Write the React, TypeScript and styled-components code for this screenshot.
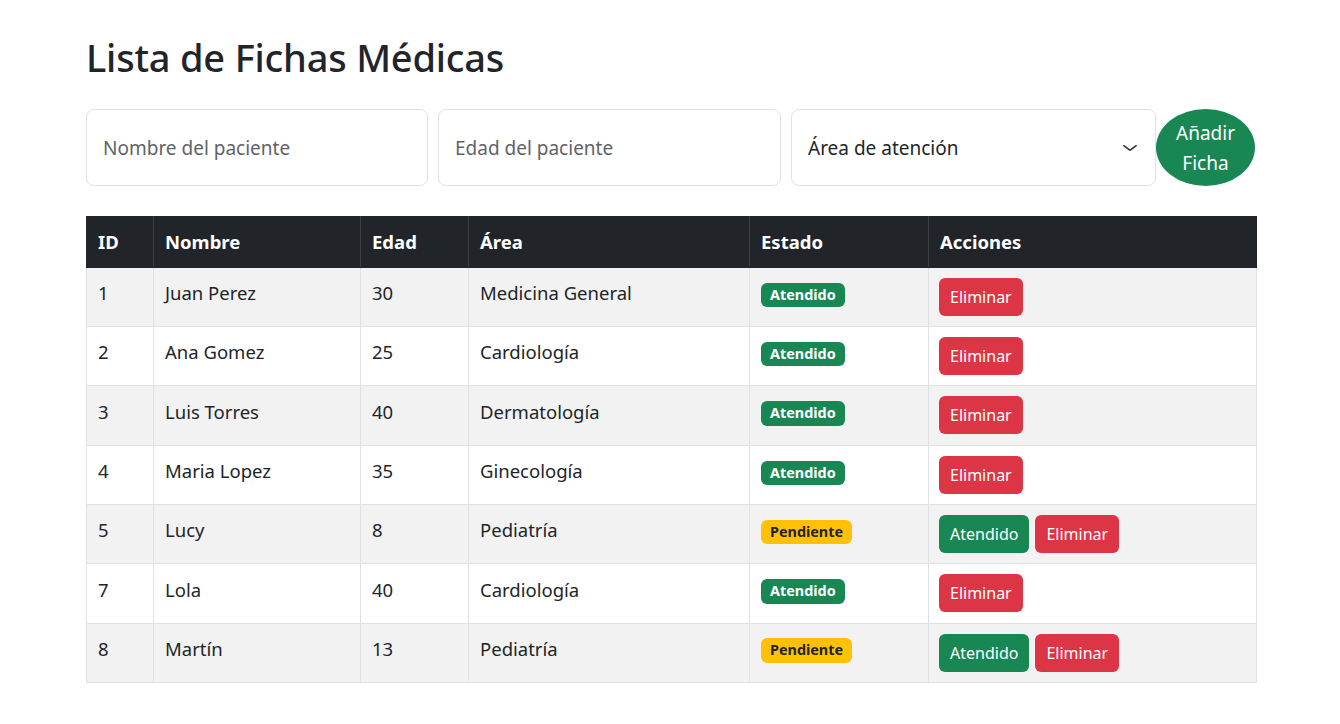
import React from "react";
import styled, { createGlobalStyle } from "styled-components";

const GlobalStyle = createGlobalStyle`
  html, body { margin: 0; padding: 0; background: #ffffff; }
  body {
    font-family: "Noto Sans", "Open Sans", sans-serif;
    color: #212529;
    font-size: 16px;
    line-height: 1.5;
  }
  * { box-sizing: border-box; }
`;

const Page = styled.div`
  width: 1170px;
  margin: 0 0 0 86px;
  padding-top: 33px;
`;

const Title = styled.h1`
  margin: 0 0 28px 0;
  font-size: 38px;
  font-weight: 500;
  line-height: 48px;
  color: #212529;
  letter-spacing: -0.2px;
`;

const FormRow = styled.div`
  display: flex;
  align-items: stretch;
  height: 77px;
  margin-bottom: 30px;
`;

const TextInput = styled.input<{ $width: number }>`
  width: ${(p) => p.$width}px;
  height: 77px;
  margin-right: 10px;
  padding: 0 16px;
  border: 1px solid #dee2e6;
  border-radius: 8px;
  font-family: inherit;
  font-size: 19px;
  color: #212529;
  background: #fff;
  outline: none;
  &::placeholder { color: #5f6367; }
`;

const SelectWrap = styled.div`
  position: relative;
  width: 365px;
  height: 77px;
`;

const Select = styled.select`
  appearance: none;
  width: 100%;
  height: 100%;
  padding: 0 48px 0 16px;
  border: 1px solid #dee2e6;
  border-radius: 8px;
  font-family: inherit;
  font-size: 19px;
  color: #212529;
  background: #fff;
  outline: none;
`;

const Chevron = styled.svg`
  position: absolute;
  right: 18px;
  top: 33px;
  width: 16px;
  height: 12px;
  pointer-events: none;
`;

const AddButton = styled.button`
  width: 99px;
  height: 77px;
  border: none;
  border-radius: 50%;
  background: #198754;
  color: #fff;
  font-family: inherit;
  font-size: 19px;
  line-height: 30px;
  padding: 0 10px;
  cursor: pointer;
`;

const Table = styled.table`
  width: 1170px;
  border-collapse: collapse;
  table-layout: fixed;
  font-size: 18.5px;
  line-height: 1.5;
`;

const HeadCell = styled.th`
  background: #212529;
  color: #fff;
  font-weight: 700;
  text-align: left;
  padding: 11px 11px;
  border: 1px solid #3b3f44;
  border-top-color: #212529;
  border-bottom-color: #212529;
  &:first-child { border-left-color: #212529; }
  &:last-child { border-right-color: #212529; }
`;

const Row = styled.tr<{ $striped: boolean }>`
  height: 59.3px;
  background: ${(p) => (p.$striped ? "#f2f2f2" : "#ffffff")};
`;

const Cell = styled.td<{ $lift?: boolean }>`
  padding: ${(p) => (p.$lift ? "6px 11px 14px" : "10px 10px")};
  border: 1px solid #dee2e6;
  vertical-align: middle;
  color: #212529;
  white-space: nowrap;
`;

const Badge = styled.span<{ $pending: boolean }>`
  display: inline-block;
  padding: 5px 9px;
  font-size: 14.4px;
  font-weight: 700;
  line-height: 1;
  border-radius: 6px;
  background: ${(p) => (p.$pending ? "#ffc107" : "#198754")};
  color: ${(p) => (p.$pending ? "#212529" : "#ffffff")};
  vertical-align: middle;
`;

const ActionButton = styled.button<{ $variant: "success" | "danger" }>`
  display: inline-block;
  height: 38px;
  padding: 0 11px;
  margin-right: 6px;
  border: none;
  border-radius: 6px;
  background: ${(p) => (p.$variant === "success" ? "#198754" : "#dc3545")};
  color: #fff;
  font-family: inherit;
  font-size: 16px;
  line-height: 38px;
  vertical-align: middle;
  cursor: pointer;
`;

type Ficha = { id: number; nombre: string; edad: number; area: string; atendido: boolean };

const fichas: Ficha[] = [
  { id: 1, nombre: "Juan Perez", edad: 30, area: "Medicina General", atendido: true },
  { id: 2, nombre: "Ana Gomez", edad: 25, area: "Cardiología", atendido: true },
  { id: 3, nombre: "Luis Torres", edad: 40, area: "Dermatología", atendido: true },
  { id: 4, nombre: "Maria Lopez", edad: 35, area: "Ginecología", atendido: true },
  { id: 5, nombre: "Lucy", edad: 8, area: "Pediatría", atendido: false },
  { id: 7, nombre: "Lola", edad: 40, area: "Cardiología", atendido: true },
  { id: 8, nombre: "Martín", edad: 13, area: "Pediatría", atendido: false },
];

const colWidths = [67, 207, 108, 281, 179, 328];

export default function App() {
  return (
    <>
      <GlobalStyle />
      <Page>
        <Title>Lista de Fichas Médicas</Title>
        <FormRow>
          <TextInput $width={342} placeholder="Nombre del paciente" />
          <TextInput $width={343} placeholder="Edad del paciente" />
          <SelectWrap>
            <Select defaultValue="">
              <option value="">Área de atención</option>
              <option>Medicina General</option>
              <option>Cardiología</option>
              <option>Dermatología</option>
              <option>Ginecología</option>
              <option>Pediatría</option>
            </Select>
            <Chevron viewBox="0 0 16 16" preserveAspectRatio="none">
              <path d="m2 5 6 6 6-6" fill="none" stroke="#343a40" strokeWidth="2" strokeLinecap="round" strokeLinejoin="round" />
            </Chevron>
          </SelectWrap>
          <AddButton>Añadir Ficha</AddButton>
        </FormRow>
        <Table>
          <colgroup>
            {colWidths.map((w, i) => (
              <col key={i} style={{ width: w }} />
            ))}
          </colgroup>
          <thead>
            <tr>
              <HeadCell>ID</HeadCell>
              <HeadCell>Nombre</HeadCell>
              <HeadCell>Edad</HeadCell>
              <HeadCell>Área</HeadCell>
              <HeadCell>Estado</HeadCell>
              <HeadCell>Acciones</HeadCell>
            </tr>
          </thead>
          <tbody>
            {fichas.map((f, i) => (
              <Row key={f.id} $striped={i % 2 === 0}>
                <Cell $lift>{f.id}</Cell>
                <Cell $lift>{f.nombre}</Cell>
                <Cell $lift>{f.edad}</Cell>
                <Cell $lift>{f.area}</Cell>
                <Cell $lift>
                  <Badge $pending={!f.atendido}>{f.atendido ? "Atendido" : "Pendiente"}</Badge>
                </Cell>
                <Cell>
                  {!f.atendido && <ActionButton $variant="success">Atendido</ActionButton>}
                  <ActionButton $variant="danger">Eliminar</ActionButton>
                </Cell>
              </Row>
            ))}
          </tbody>
        </Table>
      </Page>
    </>
  );
}
